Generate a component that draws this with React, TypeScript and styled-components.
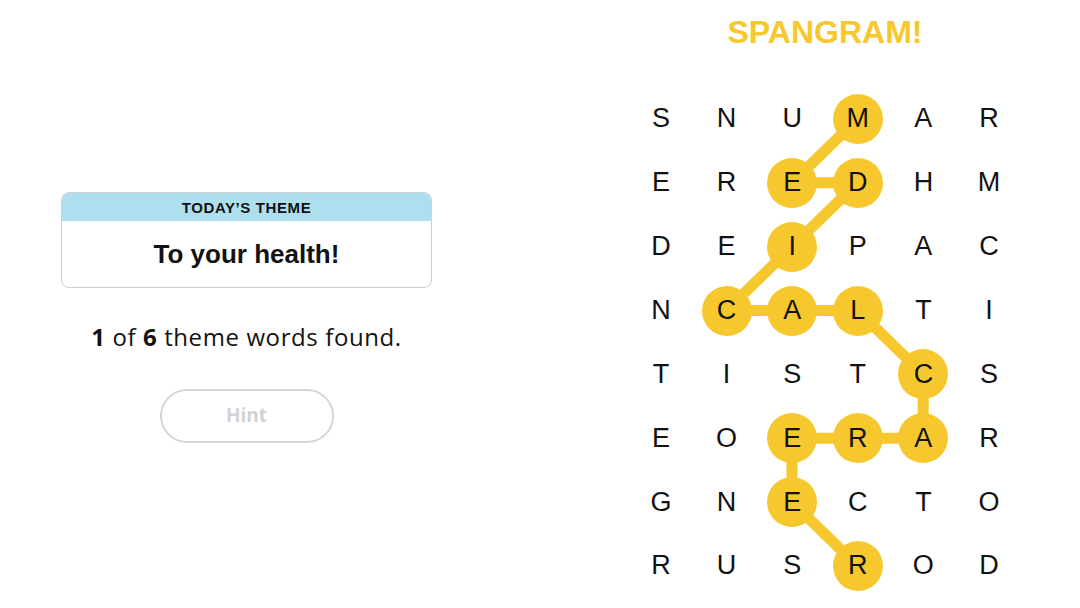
import React from "react";
import styled, { createGlobalStyle } from "styled-components";

const GlobalStyle = createGlobalStyle`
  html, body {
    margin: 0;
    padding: 0;
    background: #ffffff;
  }
  body {
    font-family: "Liberation Sans", Arial, sans-serif;
    color: #000000;
  }
`;

const COL = 65.6;
const ROW = 63.86;
const YELLOW = "#f7c82d";

const letters = [
  "SNUMAR",
  "EREDHM",
  "DEIPAC",
  "NCALTI",
  "TISTCS",
  "EOERAR",
  "GNECTO",
  "RUSROD",
];

// spangram path, row/col
const path: [number, number][] = [
  [0, 3], [1, 2], [1, 3], [2, 2], [3, 1], [3, 2], [3, 3],
  [4, 4], [5, 4], [5, 3], [5, 2], [6, 2], [7, 3],
];

const Page = styled.div`
  display: flex;
  width: 1080px;
  height: 608px;
  overflow: hidden;
`;

const LeftPanel = styled.div`
  width: 371px;
  margin-left: 61px;
  padding-top: 192px;
  display: flex;
  flex-direction: column;
  align-items: center;
`;

const ThemeCard = styled.div`
  width: 100%;
  box-sizing: border-box;
  border: 1px solid #cfcfcf;
  border-radius: 8px;
  overflow: hidden;
`;

const ThemeHeader = styled.div`
  height: 28px;
  background: #aedfee;
  display: flex;
  align-items: center;
  justify-content: center;
  font-family: "Liberation Sans Narrow", "Liberation Sans", sans-serif;
  font-weight: 700;
  font-size: 15px;
  letter-spacing: 0.6px;
  color: #121212;
`;

const ThemeBody = styled.div`
  height: 66px;
  display: flex;
  align-items: center;
  justify-content: center;
  font-family: "Liberation Sans", Arial, sans-serif;
  font-weight: 700;
  font-size: 26px;
  color: #121212;
`;

const FoundText = styled.p`
  margin: 32px 0 0;
  font-family: "Open Sans", "Liberation Sans", sans-serif;
  font-size: 24px;
  letter-spacing: 0.6px;
  color: #121212;

  b {
    font-weight: 700;
  }
`;

const HintButton = styled.button`
  margin-top: 36px;
  width: 174px;
  height: 54px;
  border: 2px solid #d6d6d6;
  border-radius: 27px;
  background: #ffffff;
  color: #d2d2d2;
  font-family: "Open Sans", "Liberation Sans", sans-serif;
  font-weight: 700;
  font-size: 19px;
  padding: 0 0 3px;
`;

const RightPanel = styled.div`
  width: 394px;
  margin-left: 196px;
  display: flex;
  flex-direction: column;
  align-items: center;
`;

const Title = styled.h1`
  margin: 12px 0 0;
  height: 40px;
  line-height: 40px;
  font-family: "Liberation Sans", Arial, sans-serif;
  font-weight: 700;
  font-size: 32px;
  color: ${YELLOW};
`;

const Board = styled.div`
  position: relative;
  margin-top: 35px;
  width: ${COL * 6}px;
  height: ${ROW * 8}px;
`;

const PathLayer = styled.svg`
  position: absolute;
  left: 0;
  top: 0;
`;

const Grid = styled.div`
  position: relative;
  display: grid;
  grid-template-columns: repeat(6, ${COL}px);
  grid-template-rows: repeat(8, ${ROW}px);
`;

const Cell = styled.div`
  display: flex;
  align-items: center;
  justify-content: center;
`;

const Letter = styled.span<{ $on: boolean }>`
  width: 50px;
  height: 50px;
  border-radius: 50%;
  display: flex;
  align-items: center;
  justify-content: center;
  background: ${(p) => (p.$on ? YELLOW : "transparent")};
  font-family: "Liberation Sans", Arial, sans-serif;
  font-size: 27px;
  color: #121212;
`;

const isOn = (r: number, c: number) => path.some(([pr, pc]) => pr === r && pc === c);

const App: React.FC = () => {
  const points = path
    .map(([r, c]) => `${(c + 0.5) * COL},${(r + 0.5) * ROW}`)
    .join(" ");

  return (
    <Page>
      <GlobalStyle />
      <LeftPanel>
        <ThemeCard>
          <ThemeHeader>TODAY’S THEME</ThemeHeader>
          <ThemeBody>To your health!</ThemeBody>
        </ThemeCard>
        <FoundText>
          <b>1</b> of <b>6</b> theme words found.
        </FoundText>
        <HintButton>Hint</HintButton>
      </LeftPanel>
      <RightPanel>
        <Title>SPANGRAM!</Title>
        <Board>
          <PathLayer width={COL * 6} height={ROW * 8}>
            <polyline
              points={points}
              fill="none"
              stroke={YELLOW}
              strokeWidth={11}
              strokeLinejoin="round"
              strokeLinecap="round"
            />
          </PathLayer>
          <Grid>
            {letters.map((row, r) =>
              row.split("").map((ch, c) => (
                <Cell key={`${r}-${c}`}>
                  <Letter $on={isOn(r, c)}>{ch}</Letter>
                </Cell>
              ))
            )}
          </Grid>
        </Board>
      </RightPanel>
    </Page>
  );
};

export default App;
